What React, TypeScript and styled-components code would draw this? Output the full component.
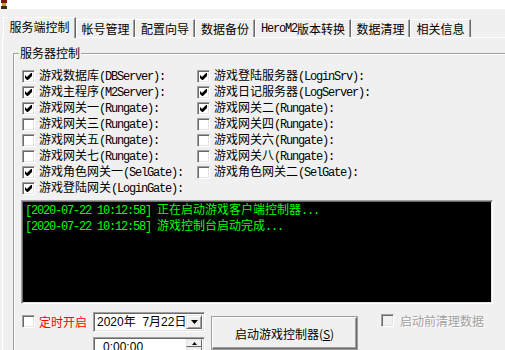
import React from 'react';
import styled, { createGlobalStyle } from 'styled-components';

const Global = createGlobalStyle`
  html, body { margin: 0; padding: 0; background: #f0f0f0; }
  body { font-family: "Noto Sans CJK SC", "Liberation Sans", sans-serif; font-size: 12px; color: #000; }
  * { box-sizing: border-box; }
`;

const Window = styled.div`
  width: 505px;
  height: 350px;
  overflow: hidden;
  background: #f0f0f0;
`;

const TitleStrip = styled.div`
  height: 9px;
  background: #fff;
  display: flex;
  align-items: flex-start;
`;

const TabBar = styled.div`
  margin-top: 8px;
  height: 20px;
  display: flex;
  align-items: flex-end;
  padding-left: 3px;
`;

const Tab = styled.div<{ $w: number; $active?: boolean }>`
  position: relative;
  z-index: ${p => (p.$active ? 1 : 0)};
  width: ${p => p.$w}px;
  height: ${p => (p.$active ? 21 : 18)}px;
  margin-bottom: ${p => (p.$active ? -1 : 0)}px;
  padding-bottom: ${p => (p.$active ? 2 : 0)}px;
  background: #f0f0f0;
  border-top: 1px solid #fff;
  border-left: 1px solid #fff;
  border-right: 1px solid #696969;
  box-shadow: inset -1px 0 0 #a0a0a0;
  display: flex;
  align-items: center;
  justify-content: center;
  font-size: 12px;
  line-height: 12px;
  white-space: nowrap;
`;

const Pane = styled.div`
  margin-left: 2px;
  height: 330px;
  border-top: 1px solid #fff;
  border-left: 1px solid #fff;
  padding: 15px 0 0 10px;
`;

const GroupBox = styled.div`
  position: relative;
  width: 510px;
  height: 320px;
  border: 1px solid #a0a0a0;
  box-shadow: inset 1px 1px 0 #fff, 1px 1px 0 #fff;
  padding: 14px 0 0 8px;
`;

const Legend = styled.span`
  position: absolute;
  top: -9px;
  left: 5px;
  padding: 0 1px;
  background: #f0f0f0;
  line-height: 16px;
  font-size: 12px;
`;

const Grid = styled.div`
  display: grid;
  grid-template-columns: 175px 1fr;
  grid-template-rows: repeat(8, 16px);
  grid-auto-flow: column;
`;

const Row = styled.label`
  display: flex;
  align-items: center;
  height: 16px;
  white-space: nowrap;
`;

const Box = styled.span<{ $disabled?: boolean }>`
  flex: none;
  width: 13px;
  height: 13px;
  background: ${p => (p.$disabled ? '#f0f0f0' : '#fff')};
  border-top: 1px solid #a0a0a0;
  border-left: 1px solid #a0a0a0;
  border-right: 1px solid #fff;
  border-bottom: 1px solid #fff;
  box-shadow: inset 1px 1px 0 #696969, inset -1px -1px 0 #e3e3e3;
  display: flex;
  align-items: center;
  justify-content: center;
`;

const Text = styled.span<{ $color?: string; $gap?: number; $etched?: boolean }>`
  margin-left: ${p => p.$gap ?? 4}px;
  font-size: 12px;
  line-height: 16px;
  color: ${p => p.$color ?? '#000'};
  text-shadow: ${p => (p.$etched ? '1px 1px 0 #fff' : 'none')};
  white-space: nowrap;
`;

const Mono = styled.span`
  font-family: "Liberation Mono", "DejaVu Sans Mono", monospace;
  font-size: 12px;
  letter-spacing: -1.2px;
`;

const Log = styled.div`
  margin-top: 4px;
  margin-left: -1px;
  width: 472px;
  height: 104px;
  background: #000;
  border-top: 1px solid #a0a0a0;
  border-left: 1px solid #a0a0a0;
  border-right: 1px solid #fff;
  border-bottom: 1px solid #fff;
  box-shadow: inset 1px 1px 0 #696969, inset -1px -1px 0 #e3e3e3;
  padding: 1px 0 0 3px;
  color: #00ff00;
  font-size: 12px;
  line-height: 14px;
`;

const LogLine = styled.div`
  white-space: nowrap;
`;

const BottomRow = styled.div`
  margin-top: 8px;
  display: flex;
  align-items: flex-start;
`;

const CheckGroup = styled.div<{ $top: number; $left?: number }>`
  display: flex;
  align-items: center;
  height: 13px;
  margin-top: ${p => p.$top}px;
  margin-left: ${p => p.$left ?? 0}px;
`;

const PickerColumn = styled.div`
  margin-left: 6px;
  display: flex;
  flex-direction: column;
  gap: 5px;
`;

const Picker = styled.div<{ $pad: number }>`
  width: 112px;
  height: 20px;
  background: #fff;
  border-top: 1px solid #a0a0a0;
  border-left: 1px solid #a0a0a0;
  border-right: 1px solid #fff;
  border-bottom: 1px solid #fff;
  box-shadow: inset 1px 1px 0 #696969, inset -1px -1px 0 #e3e3e3;
  display: flex;
  align-items: center;
  justify-content: space-between;
  padding: 1px 2px 1px ${p => p.$pad}px;
  font-family: "Liberation Sans", "Noto Sans CJK SC", sans-serif;
  font-size: 12px;
`;

const PickerText = styled.span`
  white-space: nowrap;
  line-height: 14px;
`;

const DropButton = styled.span`
  width: 16px;
  height: 14px;
  background: #f0f0f0;
  border-top: 1px solid #e3e3e3;
  border-left: 1px solid #e3e3e3;
  border-right: 1px solid #696969;
  border-bottom: 1px solid #696969;
  box-shadow: inset 1px 1px 0 #fff, inset -1px -1px 0 #a0a0a0;
  display: flex;
  align-items: center;
  justify-content: center;
`;

const Spin = styled.span`
  align-self: flex-start;
  display: flex;
  flex-direction: column;
`;

const SpinPart = styled.span`
  width: 16px;
  height: 8px;
  background: #f0f0f0;
  border-top: 1px solid #e3e3e3;
  border-left: 1px solid #e3e3e3;
  border-right: 1px solid #696969;
  border-bottom: 1px solid #696969;
  display: flex;
  align-items: center;
  justify-content: center;
`;

const Button = styled.button`
  margin-top: 5px;
  margin-left: 7px;
  width: 145px;
  height: 32px;
  background: #f0f0f0;
  border-top: 1px solid #fff;
  border-left: 1px solid #fff;
  border-right: 1px solid #696969;
  border-bottom: 1px solid #696969;
  box-shadow: inset -1px -1px 0 #a0a0a0, 0 0 0 1px #a0a0a0;
  font-family: "Noto Sans CJK SC", "Liberation Sans", sans-serif;
  font-size: 12px;
  color: #000;
  padding: 0;
  display: flex;
  align-items: center;
  justify-content: center;
`;

const U = styled.span`
  text-decoration: underline;
`;

const Check = () => (
  <svg width="9" height="9" viewBox="0 0 9 9">
    <polygon points="1,3 3,5 7,1 8,1 8,4 4,8 3,8 1,6" fill="#000" />
  </svg>
);

const AppIcon = () => (
  <svg width="8" height="9" viewBox="0 0 8 9">
    <rect x="1" y="0" width="6" height="3" fill="#7a1a10" />
    <rect x="2" y="3" width="4" height="3" fill="#c8a030" />
    <rect x="1" y="6" width="6" height="3" fill="#3a2a20" />
  </svg>
);

type Item = { cn: string; en: string; on: boolean };

const items: Item[] = [
  { cn: '游戏数据库', en: '(DBServer):', on: true },
  { cn: '游戏主程序', en: '(M2Server):', on: true },
  { cn: '游戏网关一', en: '(Rungate):', on: true },
  { cn: '游戏网关三', en: '(Rungate):', on: false },
  { cn: '游戏网关五', en: '(Rungate):', on: false },
  { cn: '游戏网关七', en: '(Rungate):', on: false },
  { cn: '游戏角色网关一', en: '(SelGate):', on: true },
  { cn: '游戏登陆网关', en: '(LoginGate):', on: true },
  { cn: '游戏登陆服务器', en: '(LoginSrv):', on: true },
  { cn: '游戏日记服务器', en: '(LogServer):', on: true },
  { cn: '游戏网关二', en: '(Rungate):', on: true },
  { cn: '游戏网关四', en: '(Rungate):', on: false },
  { cn: '游戏网关六', en: '(Rungate):', on: false },
  { cn: '游戏网关八', en: '(Rungate):', on: false },
  { cn: '游戏角色网关二', en: '(SelGate):', on: false },
];

const tabs: { label: React.ReactNode; w: number; active?: boolean }[] = [
  { label: '服务端控制', w: 73, active: true },
  { label: '帐号管理', w: 59 },
  { label: '配置向导', w: 60 },
  { label: '数据备份', w: 60 },
  { label: <><Mono>HeroM2</Mono>版本转换</>, w: 96 },
  { label: '数据清理', w: 59 },
  { label: '相关信息', w: 61 },
];

export default function App() {
  return (
    <Window>
      <Global />
      <TitleStrip>
        <AppIcon />
      </TitleStrip>
      <TabBar>
        {tabs.map((t, i) => (
          <Tab key={i} $w={t.w} $active={t.active}>
            {t.label}
          </Tab>
        ))}
      </TabBar>
      <Pane>
        <GroupBox>
          <Legend>服务器控制</Legend>
          <Grid>
            {items.map((it, i) => (
              <Row key={i}>
                <Box>{it.on && <Check />}</Box>
                <Text>
                  {it.cn}
                  <Mono>{it.en}</Mono>
                </Text>
              </Row>
            ))}
          </Grid>
          <Log>
            <LogLine>
              <Mono>[2020-07-22 10:12:58] </Mono>正在启动游戏客户端控制器<Mono>...</Mono>
            </LogLine>
            <LogLine>
              <Mono>[2020-07-22 10:12:58] </Mono>游戏控制台启动完成<Mono>...</Mono>
            </LogLine>
          </Log>
          <BottomRow>
            <CheckGroup $top={3}>
              <Box />
              <Text $color="#ff0000">定时开启</Text>
            </CheckGroup>
            <PickerColumn>
              <Picker $pad={3}>
                <PickerText>2020年&nbsp;&nbsp;7月22日</PickerText>
                <DropButton>
                  <svg width="7" height="4" viewBox="0 0 7 4">
                    <polygon points="0,0 7,0 3.5,4" fill="#000" />
                  </svg>
                </DropButton>
              </Picker>
              <Picker $pad={9}>
                <PickerText>0:00:00</PickerText>
                <Spin>
                  <SpinPart>
                    <svg width="5" height="3" viewBox="0 0 5 3">
                      <polygon points="2.5,0 5,3 0,3" fill="#000" />
                    </svg>
                  </SpinPart>
                  <SpinPart />
                </Spin>
              </Picker>
            </PickerColumn>
            <Button>
              启动游戏控制器(<U>S</U>)
            </Button>
            <CheckGroup $top={2} $left={24}>
              <Box $disabled />
              <Text $color="#a0a0a0" $gap={6} $etched>
                启动前清理数据
              </Text>
            </CheckGroup>
          </BottomRow>
        </GroupBox>
      </Pane>
    </Window>
  );
}
